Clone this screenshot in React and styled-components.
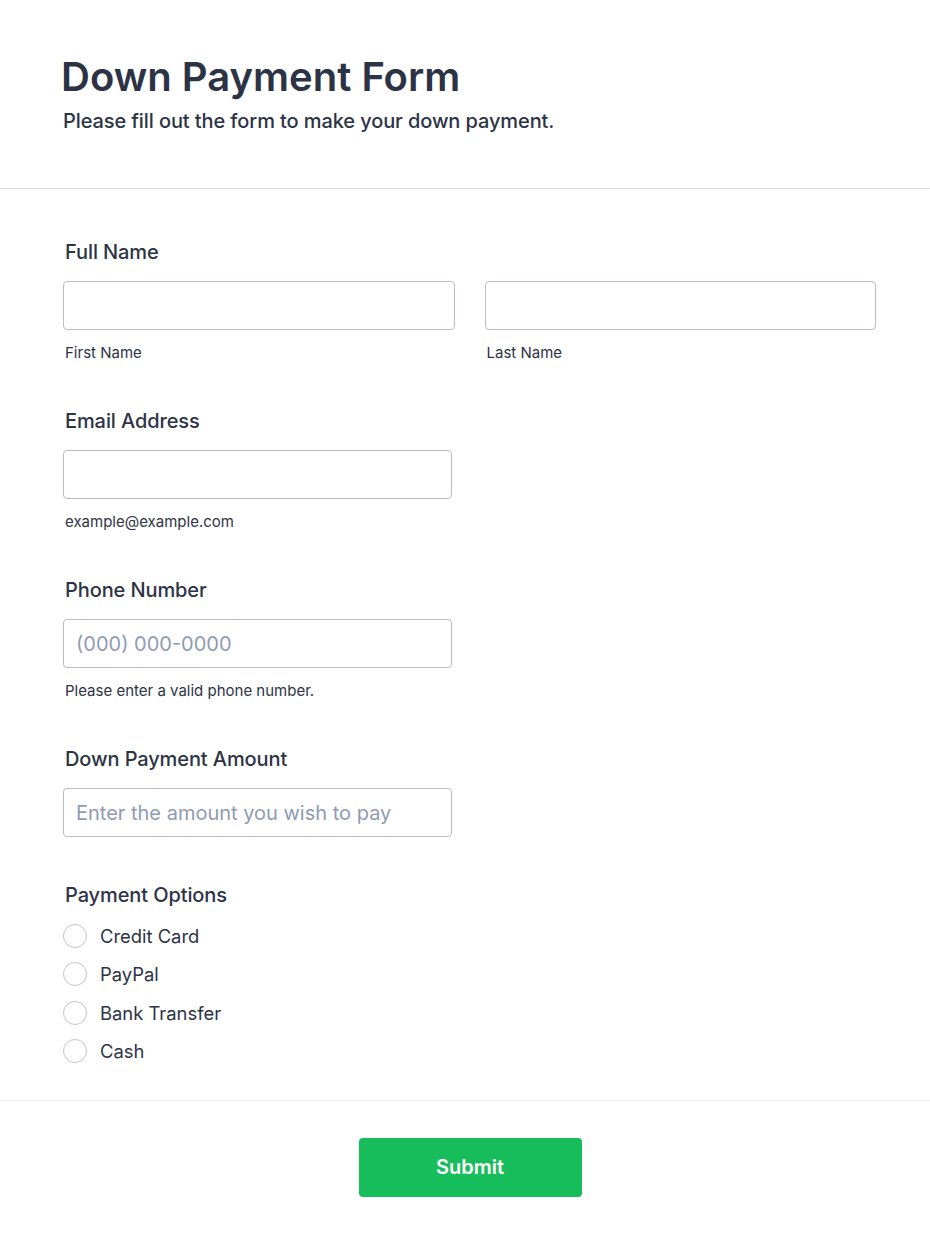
import React from "react";
import styled, { createGlobalStyle } from "styled-components";

const Global = createGlobalStyle`
  * { box-sizing: border-box; }
  html, body { margin: 0; padding: 0; background: #ffffff; }
  body { font-family: Inter, "Noto Sans", sans-serif; color: #2c3345; }
`;

const Page = styled.div`
  width: 930px;
  min-height: 1246px;
  background: #fff;
`;

const Header = styled.header`
  padding: 53px 54px 55px 61px;
  border-bottom: 1px solid #d8dae3;
`;

const Title = styled.h1`
  margin: 0;
  font-size: 40px;
  line-height: 48px;
  font-weight: 600;
  color: #2c3345;
`;

const Subtitle = styled.p`
  margin: 8px 0 0 2px;
  font-size: 20px;
  letter-spacing: -0.1px;
  line-height: 24px;
  font-weight: 500;
  color: #2c3345;
`;

const Body = styled.div`
  padding: 51px 54px 37px 63px;
  display: flex;
  flex-direction: column;
  gap: 46px;
  border-bottom: 1px solid #e8e9ef;
`;

const Field = styled.div`
  display: flex;
  flex-direction: column;
`;

const Label = styled.label`
  display: block;
  padding-left: 2px;
  margin-bottom: ${(p) => p.$mb ?? 17}px;
  font-size: 20px;
  letter-spacing: -0.1px;
  line-height: 24px;
  font-weight: 500;
  color: #2c3345;
`;

const Row = styled.div`
  display: grid;
  grid-template-columns: 1fr 1fr;
  column-gap: 30px;
`;

const Col = styled.div`
  display: flex;
  flex-direction: column;
`;

const Input = styled.input`
  width: ${(p) => p.$w || "100%"};
  height: 49px;
  border: 1px solid #b8bdc9;
  border-radius: 4px;
  padding: 0 12px;
  font-family: Inter, "Noto Sans", sans-serif;
  font-size: 20px;
  color: #2c3345;
  background: #fff;
  outline: none;
  &::placeholder { color: #8f9bb3; }
`;

const Helper = styled.span`
  display: block;
  padding-left: 2px;
  margin-top: 13px;
  font-size: 15px;
  line-height: 20px;
  font-weight: 400;
  color: #2c3345;
`;

const Options = styled.div`
  display: flex;
  flex-direction: column;
  gap: 14.3px;
`;

const Option = styled.label`
  display: flex;
  align-items: center;
  gap: 13px;
  font-size: 18.4px;
  line-height: 24px;
  color: #2c3345;
  cursor: pointer;
`;

const Radio = styled.span`
  width: 24px;
  height: 24px;
  border-radius: 50%;
  border: 1px solid #bfc5d1;
  background: #fff;
  flex: none;
`;

const Footer = styled.div`
  display: flex;
  justify-content: center;
  padding: 37px 52px 50px 62px;
`;

const Submit = styled.button`
  width: 223px;
  height: 59px;
  border: none;
  border-radius: 4px;
  background: #18bd5b;
  color: #fff;
  font-family: Inter, "Noto Sans", sans-serif;
  font-size: 20px;
  font-weight: 600;
  cursor: pointer;
`;

const options = ["Credit Card", "PayPal", "Bank Transfer", "Cash"];

export default function App() {
  return (
    <Page>
      <Global />
      <Header>
        <Title>Down Payment Form</Title>
        <Subtitle>Please fill out the form to make your down payment.</Subtitle>
      </Header>
      <Body>
        <Field>
          <Label>Full Name</Label>
          <Row>
            <Col>
              <Input type="text" />
              <Helper>First Name</Helper>
            </Col>
            <Col>
              <Input type="text" />
              <Helper>Last Name</Helper>
            </Col>
          </Row>
        </Field>
        <Field>
          <Label>Email Address</Label>
          <Input type="email" $w="389px" />
          <Helper>example@example.com</Helper>
        </Field>
        <Field>
          <Label>Phone Number</Label>
          <Input type="tel" $w="389px" placeholder="(000) 000-0000" />
          <Helper>Please enter a valid phone number.</Helper>
        </Field>
        <Field>
          <Label>Down Payment Amount</Label>
          <Input type="text" $w="389px" placeholder="Enter the amount you wish to pay" />
        </Field>
        <Field>
          <Label $mb={17}>Payment Options</Label>
          <Options>
            {options.map((o) => (
              <Option key={o}>
                <Radio />
                {o}
              </Option>
            ))}
          </Options>
        </Field>
      </Body>
      <Footer>
        <Submit type="button">Submit</Submit>
      </Footer>
    </Page>
  );
}
